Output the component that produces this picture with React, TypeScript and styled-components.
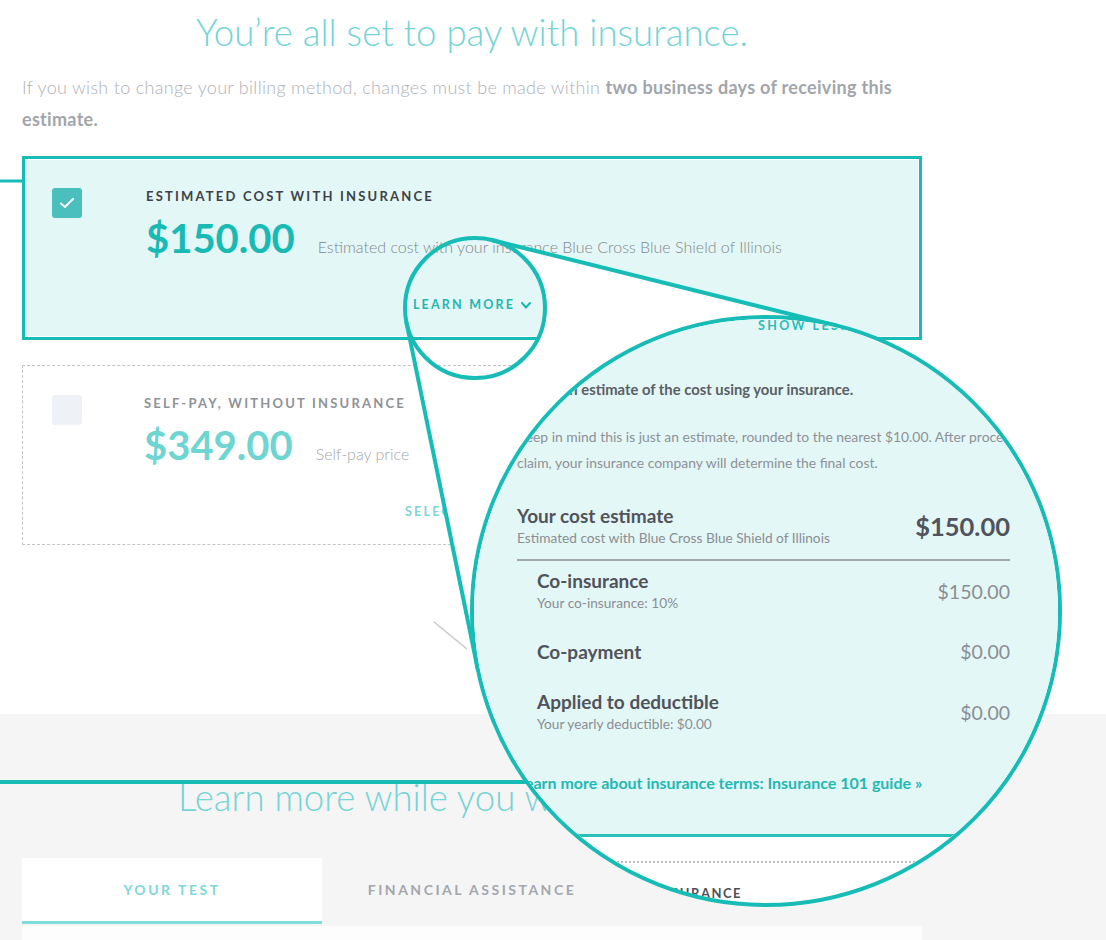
import React from 'react';
import styled, { createGlobalStyle } from 'styled-components';

const TEAL = '#17bcb6';
const CARD_BG = '#e3f7f6';

const GlobalStyle = createGlobalStyle`
  html, body {
    margin: 0;
    padding: 0;
    background: #fff;
  }
  body {
    font-family: Lato, "Open Sans", "Noto Sans", sans-serif;
    -webkit-font-smoothing: antialiased;
  }
`;

const Page = styled.div`
  position: relative;
  width: 1106px;
  height: 940px;
  overflow: hidden;
  background: #fff;
`;

const TopSection = styled.section`
  padding: 10px 184px 169px 22px;
`;

const Heading = styled.h1`
  margin: 0;
  font-size: 36.6px;
  line-height: 44px;
  font-weight: 300;
  color: #74d4d6;
  text-align: center;
`;

const SectionHeading = styled(Heading)`
  line-height: 48px;
`;

const Intro = styled.p`
  margin: 17px 0 21px;
  font-size: 18px;
  line-height: 32px;
  font-weight: 300;
  letter-spacing: 0.3px;
  color: #aeb1b6;

  strong {
    font-weight: 700;
    color: #a2a5ab;
  }
`;

const OptionCard = styled.div<{ $selected?: boolean }>`
  display: flex;
  flex-direction: column;
  padding: 28px 0 24px;
  border: ${(p) => (p.$selected ? `3px solid ${TEAL}` : '1px dashed #c2c4c7')};
  background: ${(p) => (p.$selected ? CARD_BG : '#fff')};
  box-shadow: ${(p) => (p.$selected ? 'inset 0 0 0 1px #fff' : 'none')};

  & + & {
    margin-top: 25px;
  }
`;

const OptionRow = styled.div<{ $selected?: boolean }>`
  display: flex;
  padding-left: ${(p) => (p.$selected ? 27 : 29)}px;
`;

const Checkbox = styled.div<{ $checked?: boolean }>`
  flex: none;
  width: 30px;
  height: 30px;
  margin-top: 1px;
  border-radius: 3px;
  background: ${(p) => (p.$checked ? '#4bbfbd' : '#eef1f5')};
  display: flex;
  align-items: center;
  justify-content: center;
`;

const OptionBody = styled.div<{ $selected?: boolean }>`
  margin-left: ${(p) => (p.$selected ? 64 : 62)}px;
`;

const OptionLabel = styled.div<{ $selected?: boolean }>`
  font-size: 13px;
  line-height: 18px;
  font-weight: 700;
  letter-spacing: 2.2px;
  color: ${(p) => (p.$selected ? '#3e4148' : '#8f9297')};
`;

const PriceLine = styled.div`
  display: flex;
  align-items: baseline;
  gap: 23px;
  margin-top: 9px;
`;

const Price = styled.div<{ $selected?: boolean }>`
  font-size: 40px;
  line-height: 48px;
  font-weight: 700;
  color: ${(p) => (p.$selected ? '#19b9b4' : '#6fd5d3')};
`;

const PriceNote = styled.div<{ $selected?: boolean }>`
  font-size: 16px;
  font-weight: 300;
  color: ${(p) => (p.$selected ? '#83878d' : '#a3a6ab')};
`;

const CardAction = styled.div<{ $selected?: boolean }>`
  margin-top: 35px;
  display: flex;
  justify-content: center;
  align-items: center;
  gap: 6px;
  font-size: 12.5px;
  line-height: 16px;
  font-weight: 700;
  letter-spacing: 2.2px;
  color: ${(p) => (p.$selected ? '#1fb7b2' : '#7dd6d5')};
`;

const GraySection = styled.section`
  background: #f5f5f5;
  padding: 59px 184px 0 22px;
  height: 300px;
`;

const Tabs = styled.div`
  display: grid;
  grid-template-columns: repeat(3, 1fr);
  margin-top: 37px;
`;

const Tab = styled.div<{ $active?: boolean }>`
  height: 63px;
  display: flex;
  align-items: center;
  justify-content: center;
  font-size: 14px;
  font-weight: 700;
  letter-spacing: 2.5px;
  background: ${(p) => (p.$active ? '#fff' : 'transparent')};
  border-bottom: 3px solid ${(p) => (p.$active ? '#80dbdb' : 'transparent')};
  color: ${(p) => (p.$active ? '#7dd9d9' : '#a4a7ad')};
`;

const TabPanel = styled.div`
  margin-top: 2px;
  height: 60px;
  background: #fdfdfd;
`;

/* magnifier overlay */

const Overlay = styled.svg`
  position: absolute;
  left: 0;
  top: 0;
  width: 1106px;
  height: 940px;
  pointer-events: none;
`;

const Lens = styled.div`
  position: absolute;
  left: 470px;
  top: 315px;
  width: 592px;
  height: 592px;
  box-sizing: border-box;
  border: 4px solid ${TEAL};
  border-radius: 50%;
  overflow: hidden;
  background: #fff;
`;

const LensCard = styled.div`
  background: ${CARD_BG};
  border-bottom: 3px solid #2cc0bb;
  padding: 0 48px 41px 43px;
`;

const ShowLess = styled.div`
  display: flex;
  align-items: center;
  gap: 6px;
  padding-left: 241px;
  font-size: 12.5px;
  line-height: 14px;
  font-weight: 700;
  letter-spacing: 2.4px;
  color: #2bbcb8;
  white-space: nowrap;
`;

const LensLead = styled.div`
  margin-top: 46px;
  font-size: 14.8px;
  line-height: 20px;
  font-weight: 700;
  color: #5b5e65;
  white-space: nowrap;
`;

const LensNote = styled.div`
  margin-top: 25px;
  font-size: 13.9px;
  line-height: 26px;
  color: #8e9197;
  white-space: nowrap;
`;

const SummaryRow = styled.div`
  display: flex;
  justify-content: space-between;
  align-items: center;
  margin-top: 29px;
`;

const RowTitle = styled.div`
  font-size: 19px;
  line-height: 22px;
  font-weight: 700;
  color: #50535b;
`;

const RowSub = styled.div`
  margin-top: 2px;
  font-size: 13.7px;
  line-height: 18px;
  color: #8b8e94;
`;

const TotalAmount = styled.div`
  font-size: 25.5px;
  font-weight: 700;
  color: #50535b;
`;

const Divider = styled.div`
  margin-top: 12px;
  height: 2px;
  background: #a3a8ad;
`;

const Breakdown = styled.div`
  display: flex;
  flex-direction: column;
  gap: 28px;
  padding: 9px 0 0 20px;
`;

const BreakdownRow = styled.div`
  display: flex;
  justify-content: space-between;
  align-items: center;
`;

const LineAmount = styled.div`
  font-size: 19.5px;
  color: #8b8e94;
`;

const GuideLink = styled.div`
  margin-top: 40px;
  font-size: 16px;
  line-height: 20px;
  font-weight: 700;
  color: #1fb9b4;
  white-space: nowrap;
`;

const LensNext = styled.div`
  margin-top: 24px;
  border-top: 2px dotted #b9bcc0;
  padding: 22px 316px 0 0;
  display: flex;
  justify-content: flex-end;
`;

const LensNextLabel = styled.div`
  font-size: 13px;
  line-height: 16px;
  font-weight: 700;
  letter-spacing: 1.5px;
  color: #4d5058;
  white-space: nowrap;
`;

const Chevron = ({ up }: { up?: boolean }) => (
  <svg width="10" height="7" viewBox="0 0 10 7" fill="none">
    <path
      d={up ? 'M1 6 L5 1.5 L9 6' : 'M1 1 L5 5.5 L9 1'}
      stroke="currentColor"
      strokeWidth="2"
      strokeLinecap="round"
      strokeLinejoin="round"
    />
  </svg>
);

const CheckMark = () => (
  <svg width="16" height="12" viewBox="0 0 16 12" fill="none">
    <path d="M2 6.5 L6 10 L14 2" stroke="#fff" strokeWidth="2" strokeLinecap="round" />
  </svg>
);

// small lens and big lens, tangent lines computed between them
const small = { x: 475, y: 308, r: 70 };
const big = { x: 766, y: 611, r: 294 };

const tangents = () => {
  const dx = big.x - small.x;
  const dy = big.y - small.y;
  const d = Math.hypot(dx, dy);
  const theta = Math.atan2(dy, dx);
  const phi = Math.acos((big.r - small.r) / d);
  return [theta + phi, theta - phi].map((a) => {
    const nx = Math.cos(a);
    const ny = Math.sin(a);
    return {
      a: { x: small.x - small.r * nx, y: small.y - small.r * ny },
      b: { x: big.x - big.r * nx, y: big.y - big.r * ny },
    };
  });
};

const Magnifier = () => {
  const [t1, t2] = tangents();
  const hull = `M ${t1.a.x} ${t1.a.y} L ${t1.b.x} ${t1.b.y} L ${t2.b.x} ${t2.b.y} L ${t2.a.x} ${t2.a.y} A ${small.r} ${small.r} 0 1 0 ${t1.a.x} ${t1.a.y} Z`;
  return (
    <>
      <Overlay viewBox="0 0 1106 940">
        <line x1="0" y1="181" x2="24" y2="181" stroke={TEAL} strokeWidth="3" />
        <line x1="0" y1="782" x2="560" y2="782" stroke={TEAL} strokeWidth="4" />
        <line x1="434" y1="622" x2="467" y2="649" stroke="#c9c9c9" strokeWidth="1.5" />
        <path d={hull} fill="#fff" />
        {[t1, t2].map((t, i) => (
          <line key={i} x1={t.a.x} y1={t.a.y} x2={t.b.x} y2={t.b.y} stroke={TEAL} strokeWidth="4" />
        ))}
        <circle cx={small.x} cy={small.y} r={small.r} fill="none" stroke={TEAL} strokeWidth="4" />
      </Overlay>
      <Lens>
        <LensCard>
          <ShowLess>
            SHOW LESS <Chevron up />
          </ShowLess>
          <LensLead>This is an estimate of the cost using your insurance.</LensLead>
          <LensNote>
            Keep in mind this is just an estimate, rounded to the nearest $10.00. After processing your
            <br />
            claim, your insurance company will determine the final cost.
          </LensNote>
          <SummaryRow>
            <div>
              <RowTitle>Your cost estimate</RowTitle>
              <RowSub>Estimated cost with Blue Cross Blue Shield of Illinois</RowSub>
            </div>
            <TotalAmount>$150.00</TotalAmount>
          </SummaryRow>
          <Divider />
          <Breakdown>
            <BreakdownRow>
              <div>
                <RowTitle>Co-insurance</RowTitle>
                <RowSub>Your co-insurance: 10%</RowSub>
              </div>
              <LineAmount>$150.00</LineAmount>
            </BreakdownRow>
            <BreakdownRow>
              <RowTitle>Co-payment</RowTitle>
              <LineAmount>$0.00</LineAmount>
            </BreakdownRow>
            <BreakdownRow>
              <div>
                <RowTitle>Applied to deductible</RowTitle>
                <RowSub>Your yearly deductible: $0.00</RowSub>
              </div>
              <LineAmount>$0.00</LineAmount>
            </BreakdownRow>
          </Breakdown>
          <GuideLink>Learn more about insurance terms: Insurance 101 guide »</GuideLink>
        </LensCard>
        <LensNext>
          <LensNextLabel>SELF-PAY, WITHOUT INSURANCE</LensNextLabel>
        </LensNext>
      </Lens>
    </>
  );
};

export default function App() {
  return (
    <Page>
      <GlobalStyle />
      <TopSection>
        <Heading>You’re all set to pay with insurance.</Heading>
        <Intro>
          If you wish to change your billing method, changes must be made within{' '}
          <strong>two business days of receiving this estimate.</strong>
        </Intro>

        <OptionCard $selected>
          <OptionRow $selected>
            <Checkbox $checked>
              <CheckMark />
            </Checkbox>
            <OptionBody $selected>
              <OptionLabel $selected>ESTIMATED COST WITH INSURANCE</OptionLabel>
              <PriceLine>
                <Price $selected>$150.00</Price>
                <PriceNote $selected>
                  Estimated cost with your insurance Blue Cross Blue Shield of Illinois
                </PriceNote>
              </PriceLine>
            </OptionBody>
          </OptionRow>
          <CardAction $selected>
            LEARN MORE <Chevron />
          </CardAction>
        </OptionCard>

        <OptionCard>
          <OptionRow>
            <Checkbox />
            <OptionBody>
              <OptionLabel>SELF-PAY, WITHOUT INSURANCE</OptionLabel>
              <PriceLine>
                <Price>$349.00</Price>
                <PriceNote>Self-pay price</PriceNote>
              </PriceLine>
            </OptionBody>
          </OptionRow>
          <CardAction>SELECT SELF-PAY</CardAction>
        </OptionCard>
      </TopSection>

      <GraySection>
        <SectionHeading>Learn more while you wait for results.</SectionHeading>
        <Tabs>
          <Tab $active>YOUR TEST</Tab>
          <Tab>FINANCIAL ASSISTANCE</Tab>
          <Tab>YOUR INSURANCE</Tab>
        </Tabs>
        <TabPanel />
      </GraySection>

      <Magnifier />
    </Page>
  );
}
